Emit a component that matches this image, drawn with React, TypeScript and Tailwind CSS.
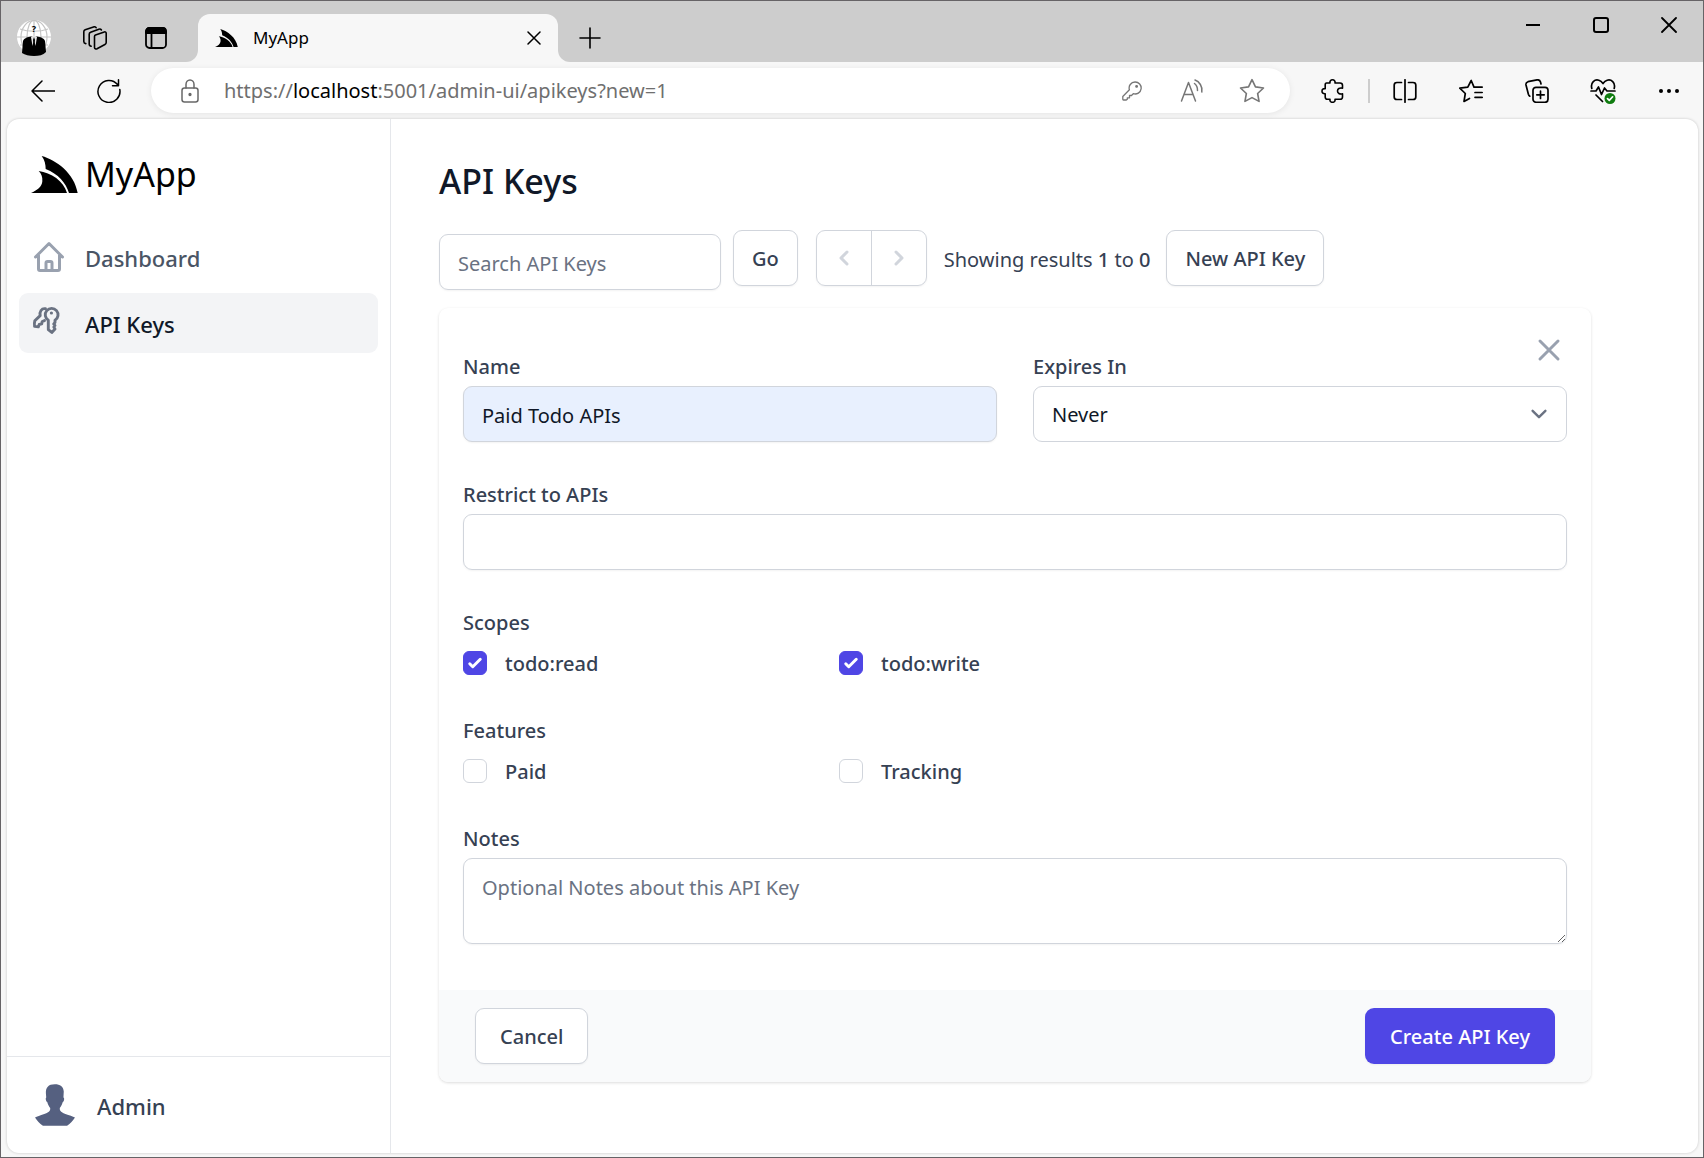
import React from "react";

type IconProps = { className?: string; children: React.ReactNode; box?: string; width?: number };

function Line({ className = "size-6", children, box = "0 0 24 24", width = 1.5 }: IconProps) {
  return (
    <svg
      viewBox={box}
      className={className}
      fill="none"
      stroke="currentColor"
      strokeWidth={width}
      strokeLinecap="round"
      strokeLinejoin="round"
      aria-hidden="true"
    >
      {children}
    </svg>
  );
}

function FinLogo({ className }: { className: string }) {
  return (
    <svg viewBox="0 0 141 111" className={className} fill="currentColor" aria-hidden="true">
      <path d="M32 0C76 12 130 52 140 111H114C104 80 82 54 44 39C44 26 41 12 32 0Z" />
      <path d="M23 45C60 50 98 75 108 111H0C18 104 33 92 34 76C35 62 31 53 23 45Z" />
    </svg>
  );
}

function Avatar() {
  return (
    <svg viewBox="0 0 34 36" className="h-9 w-[34px]" aria-hidden="true">
      <circle cx="17" cy="17" r="17" fill="#fff" />
      <g fill="none" stroke="#c4c4c4" strokeWidth="1.2">
        <ellipse cx="17" cy="17" rx="7" ry="16.5" />
        <ellipse cx="17" cy="17" rx="13" ry="16.5" />
        <path d="M17 0V34M0 17H34M3 9C11 12 23 12 31 9M3 25H31" />
      </g>
      <path
        d="M5 33L6 21C7 18 11 17 14 16.500H20C23 17 27 18 28 21L29 32C26 35 22 36 17 36C12 36 8 35 5 33Z"
        fill="#000"
      />
      <path d="M14 17L15.500 26L17 19L18.500 26L20 17L17 15Z" fill="#e5e5e5" />
      <path d="M17 17L16 20L17 26L18 20Z" fill="#000" />
      <text x="17" y="12" textAnchor="middle" fontSize="9" fontWeight="700" fill="#000">
        ?
      </text>
    </svg>
  );
}

const toolCell = "flex h-full w-[66px] items-center justify-center text-black";
const fieldCell = "flex h-full w-15 items-center justify-center text-[#767676]";
const windowCell = "flex h-full w-[68px] items-center justify-center text-black";

function TitleBar() {
  return (
    <header className="flex h-[61px] items-end bg-[#cdcdcd] pl-0.5">
      <div className="flex h-12 shrink-0 items-center text-black">
        <button type="button" aria-label="Profile" className="flex w-[61px] justify-center">
          <Avatar />
        </button>
        <button type="button" aria-label="Workspaces" className="flex w-[61px] justify-center">
          <Line width={1.6}>
            <path d="M12.500 8.900L21.300 5.900C22.300 5.600 23.200 6.200 23.200 7.200V16.500C23.200 17.400 22.700 18.100 21.900 18.500L14 22.800C12.900 23.300 11.500 22.700 11.500 21.400V10.400C11.500 9.700 11.900 9.100 12.500 8.900Z" />
            <path d="M8.200 20.200C6.800 20 6.200 19.200 6.200 18V8.300C6.200 7.300 6.800 6.600 7.600 6.300L15.800 3.200C16.900 2.800 17.900 3.200 18.400 4" />
            <path d="M2.800 17.600C1.400 17.300 .8 16.600 .8 15.400V5.800C.8 4.800 1.300 4.200 2.200 3.800L10.500 .9C11.600 .6 12.600 .9 13.100 1.700" />
          </Line>
        </button>
        <button type="button" aria-label="Tab actions" className="flex w-[61px] justify-center">
          <Line className="size-[22px]" box="0 0 22 22" width={1.8}>
            <rect x="1" y="1" width="20" height="20" rx="3.500" />
            <path d="M1 4.500C1 2 2.500 1 4.500 1H17.500C19.500 1 21 2 21 4.500V6H1Z" fill="currentColor" />
            <path d="M6.500 6V21" />
          </Line>
        </button>
      </div>

      <div className="size-3 shrink-0 bg-[#f7f7f7]">
        <div className="size-full rounded-br-xl bg-[#cdcdcd]" />
      </div>
      <div className="flex h-12 w-[360px] items-center rounded-t-xl bg-[#f7f7f7] pr-[17px] pl-[17px]">
        <FinLogo className="h-[18px] w-[23px] text-black" />
        <span className="ml-[15px] flex-1 text-[17px] text-black">MyApp</span>
        <button type="button" aria-label="Close tab" className="text-black">
          <Line className="size-[14px]" box="0 0 14 14">
            <path d="M1 1L13 13M13 1L1 13" />
          </Line>
        </button>
      </div>
      <div className="size-3 shrink-0 bg-[#f7f7f7]">
        <div className="size-full rounded-bl-xl bg-[#cdcdcd]" />
      </div>
      <button type="button" aria-label="New tab" className="ml-2 flex h-12 items-center text-black">
        <Line className="size-6" width={1.6}>
          <path d="M12 2V22M2 12H22" />
        </Line>
      </button>

      <div className="ml-auto flex h-12 self-start">
        <button type="button" aria-label="Minimize" className={windowCell}>
          <Line className="size-4" box="0 0 16 16" width={2}>
            <path d="M1 8H15" strokeLinecap="butt" />
          </Line>
        </button>
        <button type="button" aria-label="Maximize" className={windowCell}>
          <Line className="size-4" box="0 0 16 16" width={2}>
            <rect x="1" y="1" width="14" height="14" rx="2" />
          </Line>
        </button>
        <button type="button" aria-label="Close window" className={windowCell}>
          <Line className="size-4" box="0 0 16 16" width={1.8}>
            <path d="M1 1L15 15M15 1L1 15" />
          </Line>
        </button>
      </div>
    </header>
  );
}

function AddressBar() {
  return (
    <div className="flex h-[57px] items-center pr-px pl-[9px]">
      <button type="button" aria-label="Back" className={toolCell}>
        <Line>
          <path d="M24 12H1M11 2L1 12L11 22" />
        </Line>
      </button>
      <button type="button" aria-label="Refresh" className={toolCell}>
        <Line>
          <path d="M22.800 10.500A11 11 0 1 1 20.500 5.500M21.500 .8V6.800H15.500" />
        </Line>
      </button>
      <div className="ml-[9px] flex h-[45px] flex-1 items-center rounded-full bg-white pr-2 pl-[27px] shadow-[0_1px_6px_rgba(0,0,0,0.08)]">
        <Line className="size-6 shrink-0 text-[#686868]">
          <rect x="4" y="9" width="16" height="14" rx="2.500" />
          <path d="M8 9V5.500C8 3 9.700 1 12 1C14.300 1 16 3 16 5.500V9" />
          <circle cx="12" cy="15.500" r=".9" fill="currentColor" />
        </Line>
        <div className="ml-[22px] flex-1 text-xl text-[#6f6f6f]">
          https://<span className="text-black">localhost</span>:5001/admin-ui/apikeys?new=1
        </div>
        <button type="button" aria-label="Passwords" className={fieldCell}>
          <Line className="size-5" box="0 0 20 20" width={1.3}>
            <path d="M13 1A6 6 0 1 1 11.300 12.700L9.500 14.500H7.500V16.800H5.300V18.200L4.300 19H1.500C1 19 .8 18.800 .8 18.300V15.500L7.400 8.800A6 6 0 0 1 13 1Z" />
            <circle cx="14.600" cy="5.400" r=".8" fill="currentColor" />
          </Line>
        </button>
        <button type="button" aria-label="Read aloud" className={fieldCell}>
          <Line>
            <path d="M1.500 22L8.500 3.500L15.500 22M4 15.500H13M14.500 4.500C16.500 6 17.600 8.500 17.500 11.500M15 1C19.300 2.500 22.800 7.500 21.800 13" />
          </Line>
        </button>
        <button type="button" aria-label="Add to favorites" className={fieldCell}>
          <Line className="size-[26px]">
            <path d="M12 1.500L15.200 8.200L22.600 9.200L17.200 14.300L18.500 21.600L12 18.100L5.500 21.600L6.800 14.300L1.400 9.200L8.800 8.200Z" />
          </Line>
        </button>
      </div>
      <div className="ml-[10px] flex h-full items-center">
        <button type="button" aria-label="Extensions" className={toolCell}>
          <Line width={1.6}>
            <path d="M5.500 4H9C8.600 2 9.700 .8 11.500 .8C13.300 .8 14.400 2 14 4H19C20.500 4 21.500 5 21.500 6.300V9.200C18.500 8.500 16.500 9.800 16.500 12C16.500 14.200 18.500 15.500 21.500 14.800V18C21.500 19.500 20.500 20.300 19 20.300H14C14.400 22.200 13.300 23.300 11.500 23.300C9.700 23.300 8.600 22.200 9 20.300H6.500C5 20.300 4.200 19.500 4.200 18V14.800C2.200 15 1 13.900 1 12.200C1 10.500 2.200 9.400 4.200 9.700V6C4.200 4.900 4.600 4 5.500 4Z" />
          </Line>
        </button>
        <div className="mx-[2px] h-6 w-[2px] bg-[#cdcdcd]" />
        <button type="button" aria-label="Split screen" className={toolCell}>
          <Line width={1.7}>
            <path d="M12 .8V23.200M8.500 3.500H4C2.200 3.500 1.200 4.500 1.200 6V18C1.200 19.500 2.200 20.500 4 20.500H8.500M15.500 3.500H20C21.800 3.500 22.800 4.500 22.800 6V18C22.800 19.500 21.800 20.500 20 20.500H15.500" />
          </Line>
        </button>
        <button type="button" aria-label="Favorites" className={toolCell}>
          <Line width={1.7}>
            <path d="M15 8.200L12.200 1.500L8.800 8.200L.8 9.200L6.300 14.500L5 22.500L10.500 19.500M15 8.200H23.200M16 13.500H23.200M16 18.300H23.200" />
          </Line>
        </button>
        <button type="button" aria-label="Collections" className={toolCell}>
          <Line width={1.7}>
            <rect x="8" y="8.300" width="15" height="15" rx="3" />
            <path d="M15.500 12V19.500M11.800 15.800H19.200M4.800 17.200C4 16.800 3.600 16 3.400 15.300L1 6C.7 4.400 1.400 3.200 3 2.700L12 .9C13.700 .6 15 1.300 15.500 3L16 5" />
          </Line>
        </button>
        <button type="button" aria-label="Browser essentials" className={toolCell}>
          <Line className="size-[26px]" box="0 0 26 26" width={1.7}>
            <path d="M1.800 10.500C.2 4.500 5 1 8.800 2.300C10.800 3 12 4.200 13 5.500C14 4.200 15.200 3 17.200 2.300C21 1 25.800 4.500 24.200 10.500M1 13H6L8.500 9L11.500 16.500L14.500 10L17 13H25M6 17L12.500 23.500" />
            <circle cx="20" cy="20.500" r="5.500" fill="#107c10" stroke="none" />
            <path d="M17.500 20.700L19.300 22.400L22.600 18.800" stroke="#fff" />
          </Line>
        </button>
        <button type="button" aria-label="Settings and more" className={toolCell}>
          <svg viewBox="0 0 22 6" className="h-1.5 w-[22px]" fill="currentColor" aria-hidden="true">
            <circle cx="3" cy="3" r="2" />
            <circle cx="11" cy="3" r="2" />
            <circle cx="19" cy="3" r="2" />
          </svg>
        </button>
      </div>
    </div>
  );
}

function Sidebar() {
  return (
    <aside className="flex w-96 shrink-0 flex-col border-r border-gray-200">
      <div className="flex items-center gap-[7px] px-6 pt-7">
        <FinLogo className="h-[37px] w-[47px] text-black" />
        <span className="text-[34px] leading-[54px] text-black">MyApp</span>
      </div>
      <nav className="mt-[26px] flex flex-1 flex-col gap-1.5 px-3">
        <a href="#dashboard" className="flex h-15 items-center gap-[18px] rounded-[9px] px-3 text-[22px] font-medium text-gray-600">
          <Line className="size-9 text-gray-400" width={2}>
            <path d="M3 12l2-2m0 0l7-7 7 7M5 10v10a1 1 0 001 1h3m10-11l2 2m-2-2v10a1 1 0 01-1 1h-3m-6 0a1 1 0 001-1v-4a1 1 0 011-1h2a1 1 0 011 1v4a1 1 0 001 1m-6 0h6" />
          </Line>
          <span className="pt-0.5">Dashboard</span>
        </a>
        <a href="#apikeys" aria-current="page" className="flex h-15 items-center gap-[18px] rounded-[9px] bg-gray-100 px-3 text-[22px] font-medium text-gray-900">
          <Line className="size-9 text-gray-500" box="-2 -2 36 36" width={2.9}>
            <path d="M15.300 13.200A6.400 6.400 0 1 1 22 13.200V15.600L20.700 17L22 18.400L20.800 20L22 22L18.800 25.400L15.300 22.600Z" />
            <path d="M12.500 1.700C8.500 1 6.300 4.800 7.200 8.600L1.800 13.800C1.200 15.800 1.300 17.600 1.600 19.400L5.300 19.900L6.200 17.500L8.700 16.900L9.200 14.500L11.500 13.600" />
            <circle cx="18.400" cy="6" r="1.600" fill="currentColor" stroke="none" />
          </Line>
          <span className="pt-0.5">API Keys</span>
        </a>
      </nav>
      <div className="flex h-[97px] items-center gap-[22px] border-t border-gray-200 px-7">
        <svg viewBox="0 0 121 126" className="h-[42px] w-10" fill="#556080" aria-hidden="true">
          <path d="M60 0C40 0 32 10 33 28L34 40C31 41 33 52 37 54C39 62 42 67 46 72C47 82 40 86 28 90C15 94 6 98 0 101C6 110 14 120 24 126H97C107 120 115 110 121 101C114 97 104 94 92 90C82 86 74 82 75 72C80 66 82 60 84 54C88 52 90 41 86 40L87 22C86 6 76 0 60 0Z" />
        </svg>
        <span className="pt-0.5 text-[22px] font-medium text-gray-700">Admin</span>
      </div>
    </aside>
  );
}

const outlineButton =
  "h-14 rounded-[9px] border border-gray-300 bg-white pt-0.5 text-xl font-medium text-gray-700 shadow-xs";
const field =
  "h-14 rounded-[9px] border border-gray-300 px-[18px] pt-0.5 text-xl text-gray-900 shadow-xs placeholder:text-gray-500";
const labelText = "block text-xl leading-[34px] font-medium text-gray-700";

function Toolbar() {
  return (
    <div className="mt-[25px] flex min-h-[59px] items-start">
      <form className="flex self-stretch" onSubmit={(e) => e.preventDefault()}>
        <input
          type="search"
          aria-label="Search API Keys"
          placeholder="Search API Keys"
          className={`${field} w-[282px] self-end`}
        />
        <button type="submit" className={`${outlineButton} ml-3 px-[18px]`}>
          Go
        </button>
      </form>
      <div className="ml-[18px] flex h-14 w-[111px] divide-x divide-gray-300 rounded-[9px] border border-gray-300 text-gray-300 shadow-xs">
        <button type="button" aria-label="Previous page" disabled className="flex flex-1 items-center justify-center">
          <svg viewBox="0 0 20 20" className="size-[30px]" fill="currentColor" aria-hidden="true">
            <path d="M12.707 5.293a1 1 0 010 1.414L9.414 10l3.293 3.293a1 1 0 01-1.414 1.414l-4-4a1 1 0 010-1.414l4-4a1 1 0 011.414 0z" />
          </svg>
        </button>
        <button type="button" aria-label="Next page" disabled className="flex flex-1 items-center justify-center">
          <svg viewBox="0 0 20 20" className="size-[30px]" fill="currentColor" aria-hidden="true">
            <path d="M7.293 14.707a1 1 0 010-1.414L10.586 10 7.293 6.707a1 1 0 011.414-1.414l4 4a1 1 0 010 1.414l-4 4a1 1 0 01-1.414 0z" />
          </svg>
        </button>
      </div>
      <p className="mr-4 ml-[17px] text-xl leading-[60px] whitespace-nowrap text-gray-700">
        Showing results <span className="font-medium">1</span> to <span className="font-medium">0</span>
      </p>
      <button type="button" className={`${outlineButton} px-[18px]`}>
        New API Key
      </button>
    </div>
  );
}

function Check({ label, checked }: { label: string; checked?: boolean }) {
  return (
    <label className="flex h-[30px] items-center gap-[18px] text-xl font-medium text-gray-700">
      <span className="relative size-6">
        <input
          type="checkbox"
          defaultChecked={checked}
          className="peer block size-6 appearance-none rounded-md border border-gray-300 bg-white checked:border-[#4f46e5] checked:bg-[#4f46e5]"
        />
        <svg viewBox="0 0 16 16" className="pointer-events-none invisible absolute inset-0 size-6 peer-checked:visible" fill="#fff" aria-hidden="true">
          <path d="M12.207 4.793a1 1 0 010 1.414l-5 5a1 1 0 01-1.414 0l-2-2a1 1 0 011.414-1.414L6.500 9.086l4.293-4.293a1 1 0 011.414 0z" />
        </svg>
      </span>
      <span className="pt-0.5">{label}</span>
    </label>
  );
}

function CheckGroup({ title, items }: { title: string; items: { label: string; checked?: boolean }[] }) {
  return (
    <fieldset>
      <legend className={labelText}>{title}</legend>
      <div className="mt-2 grid grid-cols-3 gap-6">
        {items.map((item) => (
          <Check key={item.label} label={item.label} checked={item.checked} />
        ))}
      </div>
    </fieldset>
  );
}

function KeyForm() {
  return (
    <form
      className="relative mt-[18px] rounded-[9px] bg-white shadow-[0_1px_3px_rgba(0,0,0,0.14)]"
      onSubmit={(e) => e.preventDefault()}
    >
      <button type="button" aria-label="Close" className="absolute top-6 right-6 text-gray-400">
        <Line className="size-9" width={2}>
          <path d="M6 6L18 18M18 6L6 18" />
        </Line>
      </button>
      <div className="flex flex-col gap-9 px-6 pt-[42px] pb-[46px]">
        <div className="grid grid-cols-2 gap-9">
          <div>
            <label htmlFor="name" className={labelText}>
              Name
            </label>
            <input id="name" type="text" defaultValue="Paid Todo APIs" className={`${field} mt-0.5 w-full bg-[#e8f0fe]`} />
          </div>
          <div>
            <label htmlFor="expires" className={labelText}>
              Expires In
            </label>
            <div className="relative mt-0.5">
              <select
                id="expires"
                defaultValue="Never"
                className="block h-14 w-full appearance-none rounded-[9px] border border-gray-300 bg-white px-[18px] pt-0.5 text-xl text-gray-900"
              >
                <option>Never</option>
              </select>
              <svg viewBox="0 0 20 20" className="pointer-events-none absolute top-3 right-3 size-8 text-gray-500" fill="none" stroke="currentColor" strokeWidth="1.5" strokeLinecap="round" strokeLinejoin="round" aria-hidden="true">
                <path d="M6 8l4 4 4-4" />
              </svg>
            </div>
          </div>
        </div>
        <div>
          <label htmlFor="apis" className={labelText}>
            Restrict to APIs
          </label>
          <input id="apis" type="text" className={`${field} mt-0.5 w-full`} />
        </div>
        <CheckGroup title="Scopes" items={[{ label: "todo:read", checked: true }, { label: "todo:write", checked: true }]} />
        <CheckGroup title="Features" items={[{ label: "Paid" }, { label: "Tracking" }]} />
        <div>
          <label htmlFor="notes" className={labelText}>
            Notes
          </label>
          <textarea
            id="notes"
            rows={2}
            placeholder="Optional Notes about this API Key"
            className="mt-0.5 block w-full rounded-[9px] border border-gray-300 px-[18px] pt-3.5 pb-2.5 text-xl leading-[30px] text-gray-900 shadow-xs placeholder:text-gray-500"
          />
        </div>
      </div>
      <div className="flex justify-between rounded-b-[9px] bg-[#f9fafb] px-9 py-[18px]">
        <button type="button" className={`${outlineButton} px-6`}>
          Cancel
        </button>
        <button type="submit" className="h-14 rounded-[9px] bg-[#4f46e5] px-[25px] pt-0.5 text-xl font-medium text-white shadow-xs">
          Create API Key
        </button>
      </div>
    </form>
  );
}

export default function App() {
  return (
    <div className="flex min-h-screen flex-col border border-[#666366] bg-[#f7f7f7] font-['Noto_Sans',sans-serif]">
      <TitleBar />
      <AddressBar />
      <div className="mr-[5px] mb-1 ml-1.5 flex flex-1 rounded-xl bg-white shadow-[0_0_3px_rgba(0,0,0,0.2)]">
        <Sidebar />
        <main className="flex-1 px-12 pt-[38px]">
          <div className="max-w-[1152px]">
            <h1 className="text-[34px] leading-[48px] font-medium text-gray-900">API Keys</h1>
            <Toolbar />
            <KeyForm />
          </div>
        </main>
      </div>
    </div>
  );
}
